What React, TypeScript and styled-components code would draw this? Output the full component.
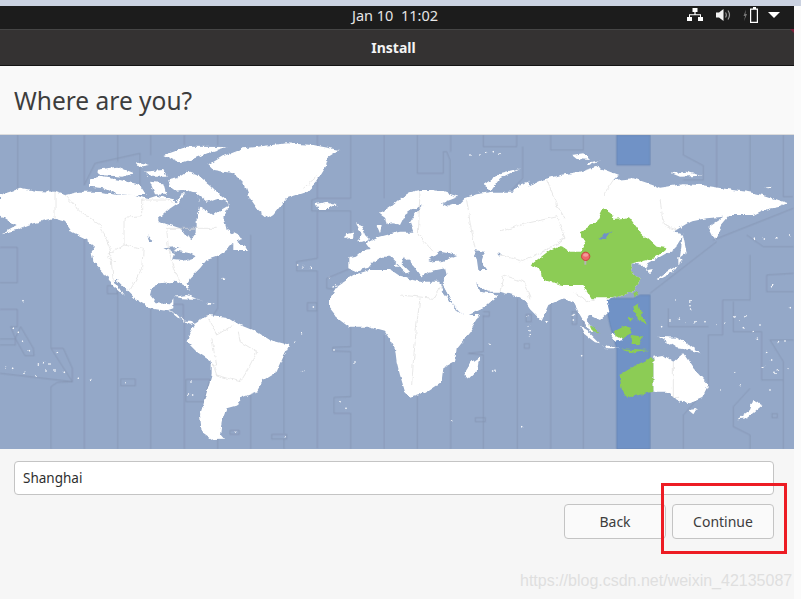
import styled, { createGlobalStyle } from 'styled-components';

const GlobalStyle = createGlobalStyle`
    html, body {
        margin: 0;
        padding: 0;
        background: #fbfbfb;
    }
    body {
        font-family: "Noto Sans", "Open Sans", sans-serif;
    }
`;

// all map shapes are in 3x coordinates, the viewBox scales them down
const westZones = [
    '53,0 53,165', '153,0 153,170', '153,250 153,640 217,740 172,742 153,755 153,942', '253,0 253,150 285,85 420,55 420,190',
    '253,310 253,942', '353,0 353,80', '353,470 353,942', '452,0 452,60', '452,500 452,942', '553,0 553,30', '553,560 553,942',
    '653,0 653,30', '653,360 653,520 640,540', '653,800 653,942', '752,300 752,942', '852,180 852,895', '852,910 852,942',
    '952,0 952,190 935,195 935,228 1052,228 1052,300', '952,230 952,370 890,380 890,408 952,408 952,940', '1052,0 1052,190 952,190',
    '1052,400 980,430 980,460 1052,470', '1052,575 1052,635 998,637 998,648 1052,650 1052,785 1002,787 1002,835 1052,835 1052,942',
    '1153,0 1153,190', '1153,600 1153,942', '0,337 52,337 52,443 0,443', '0,523 52,523 52,575 32,575 46,610 62,575 100,640 102,662 75,662 46,610 46,630 0,630',
    '0,612 46,612', '154,640 190,640 217,700 217,740 0,715', '322,452 352,452 352,476 322,476 322,452', '362,732 406,732 406,752 362,752 362,732',
    '558,733 630,733 612,800 558,800 558,733', '690,886 718,886 718,898 690,898 690,886', '815,898 860,898 860,912 815,912 815,898',
    '922,503 950,503 950,528 922,528 922,503', '515,508 550,508 550,560',
];

const eastZones = [
    '52,0 52,115 130,115 130,50 140,50 150,75 150,190', '152,0 152,50', '250,0 250,35 350,35 350,0', '452,0 452,45 550,45 550,0',
    '368,35 368,130 335,165', '52,780 52,942', '152,520 152,942', '250,540 250,650 205,655 250,660 250,942', '352,490 352,942',
    '452,490 452,942', '550,500 550,942', '850,0 850,60 910,92 910,135 850,135', '950,0 950,165', '1050,0 1050,165', '1150,0 1150,185 1178,185',
    '940,315 1180,220', '1040,300 1090,335 1180,335', '950,320 750,475', '1100,420 1180,415', '1100,420 1100,470 1180,470',
    '1050,360 1050,495 968,495 968,600 925,600 925,755 850,840 850,942', '805,520 805,575 925,575', '1000,500 1000,590 1085,590 1085,735 1150,735',
    '1110,615 1180,615', '1110,615 1150,680 1150,942', '1050,760 1000,815 1000,875 1050,900 1050,942', '226,848 256,848 256,860 226,860 226,848',
    '1116,836 1132,836 1132,848 1116,848 1116,836', '250,530 268,530 268,544 250,544', '378,538 394,538 394,560 378,560 378,538', '516,530 530,530 530,568 516,568 516,530',
    '373,626 388,626 388,640 373,640 373,626',
];

const westLand = [
    // north america
    '0,180 30,170 60,158 110,168 165,170 195,180 240,170 300,170 350,180 400,178 440,192 470,182 520,195 530,205 505,222 475,250 475,262 505,268 540,280 555,300 575,312 590,290 590,250 600,215 640,240 660,225 690,208 670,245 680,285 720,305 730,312 700,322 680,345 650,365 620,375 600,400 570,430 560,445 570,468 555,455 525,440 480,445 455,460 450,480 470,505 510,508 520,490 520,520 505,525 530,535 555,560 568,560 585,565 565,570 545,555 515,530 450,520 410,495 385,470 345,430 345,440 372,482 335,450 310,410 280,380 275,350 285,335 255,310 215,290 195,260 160,250 100,265 50,285 5,295 50,270 35,262 0,240',
    '0,190 35,198 10,210 0,205',
    // arctic islands
    '270,130 300,125 360,135 420,150 440,180 400,180 350,178 310,160 270,155', '290,105 350,95 400,115 370,125 300,120', '405,78 450,90 420,95',
    '490,60 560,35 680,36 630,52 570,75 540,85', '505,135 530,130 560,110 600,125 630,150 660,180 690,205 650,190 620,200 590,175 560,165 530,170 510,155',
    '430,110 490,105 500,125 450,125', '450,140 490,145 500,180 465,178', '525,205 545,178 590,180 600,205',
    // greenland
    '625,90 668,64 730,40 860,25 940,30 1018,45 985,65 975,100 950,140 920,170 860,190 820,240 805,250 775,225 750,190 735,150 700,115 640,105',
    // iceland, uk, caribbean
    '945,207 985,200 1010,208 985,222 955,222', '1065,265 1085,270 1095,300 1110,315 1075,322 1085,300', '1038,295 1060,290 1060,308 1036,312',
    '525,485 560,480 610,498 590,492 545,490', '615,503 645,505 625,510', '700,312 745,345 700,345',
    // south america
    '585,565 625,540 680,545 720,570 770,590 810,615 868,630 850,665 830,710 790,735 770,770 720,790 715,810 680,820 665,860 660,900 672,914 640,915 605,890 600,840 615,790 635,720 635,680 590,650 560,620 570,590',
];

const westWater = [
    '490,340 540,335 520,345 570,355 590,365 550,378 520,375 525,355', '445,298 460,318 450,318', '560,172 590,172 600,215 590,250 560,225 530,210',
];

const westBorders = [
    '165,170 165,250', '195,180 240,230 300,270 330,340 340,440', '425,195 500,195 520,205', '425,195 425,245 372,250 372,330 430,340 425,400 405,440 390,465',
    '372,330 320,365 345,380', '500,280 505,340 520,400 540,440', '500,280 650,280', '620,540 650,600 700,570', '635,610 650,690 640,690 650,720 720,740 750,690 770,650 720,620 715,590',
    '910,160 950,125',
];

const westDots = [
    [40,580],[55,592],[70,622],[88,650],[66,500],[172,650],[16,695],[38,700],[72,715],[108,722],[135,705],[150,690],[130,680],[115,690],[165,705],[190,712],[235,730],[272,730],
    [375,743],[570,738],[565,780],[578,780],[705,892],[855,908],[908,707],[905,596],[885,622],[893,390],[910,395],[932,400],[988,428],[1000,455],[1010,450],[940,516],[670,430],[1020,800],[1038,820],[1062,684],[1005,642],
];

const eastLand = [
    // eurasia
    '-155,370 -135,365 -115,348 -85,345 -100,325 -60,305 -20,295 0,290 40,290 30,262 50,232 70,210 40,222 15,240 0,270 -20,265 -40,268 -45,245 -60,235 -30,215 0,190 30,172 60,165 100,165 135,172 175,185 150,195 125,205 175,210 195,190 230,178 280,170 340,170 345,160 390,150 425,135 480,120 540,110 590,95 655,120 640,135 700,130 760,150 780,158 850,148 900,150 1000,165 1040,170 1090,180 1165,205 1140,215 1090,225 1060,240 990,240 965,270 945,315 925,275 970,245 920,250 870,260 820,290 850,300 825,340 790,360 745,385 735,410 762,405 750,418 725,390 700,385 690,410 720,435 700,470 640,490 620,495 628,530 600,555 570,540 560,555 590,592 570,590 540,540 520,500 490,490 445,510 425,555 390,520 370,490 300,470 260,470 295,480 250,520 195,545 160,510 125,445 140,420 135,400 85,410 65,425 45,395 30,380 10,365 5,385 30,410 20,415 -10,385 -30,365 -60,365 -80,380 -95,398 -135,408 -155,400',
    // africa
    '-210,490 -185,450 -140,420 -90,405 -30,405 0,425 60,440 118,440 130,470 160,510 190,540 240,540 210,590 170,640 165,680 130,700 125,740 80,770 30,785 15,770 0,720 -10,680 -15,640 -45,590 -100,575 -150,575 -190,545 -210,520',
    // islands
    '215,680 238,665 230,710 205,735 190,720', '760,665 790,660 820,680 850,655 880,700 925,750 905,790 870,805 840,800 820,790 800,770 760,770', '865,825 890,822 880,838',
    '1012,853 1050,825 1060,795 1088,810 1040,850', '775,605 830,608 870,630 905,655 870,645 830,640 800,620', '540,575 565,590 600,625 585,622 550,595', '610,630 660,640 620,640',
    '630,597 660,595 668,612 645,618', '770,432 800,410 835,390 835,365 845,375 815,415 775,435', '848,295 860,355 840,370', '250,150 300,115 360,100 300,130 275,165', '355,150 385,140 385,175 360,190',
    '815,115 860,110 905,122 840,125', '515,60 550,55 570,75 530,72', '1092,158 1115,155 1110,160', '560,85 600,75 570,90', '435,555 445,560 440,570', '-70,270 -55,270 -60,295',
    '-20,340 0,345 -5,375', '-15,385 0,395 -15,395',
];

const eastWater = [
    '85,375 120,350 175,360 130,378 100,382', '220,345 255,350 245,380 262,405 235,405 230,370', '125,445 165,520 185,535 150,500',
    '120,205 175,205 145,215', '225,445 270,475 240,470', '295,355 302,358 298,362',
];

const bands = ['650,0 750,0 750,90 650,90', '620,490 700,490 720,480 750,480 750,640 750,942 650,942 650,640 630,570 620,520'];

const chinaShapes = [
    '395,388 450,345 480,330 510,350 540,350 555,325 540,290 590,262 610,220 635,235 640,255 690,250 720,290 770,335 800,340 770,365 740,375 700,385 690,410 720,435 700,470 640,490 575,490 550,450 490,450 430,435 425,410',
    '760,675 760,770 680,788 665,760 658,720 700,695 745,672', '640,590 680,570 695,590 672,612 650,600', '700,515 715,505 725,545 745,570 720,560 705,535',
    '568,568 590,585 598,595 580,592', '695,600 730,605 715,630 695,630', '685,545 700,550 690,560', '700,475 715,470 705,490', '665,640 745,645 700,652',
];

const eastBorders = [
    '60,165 55,300 100,350', '200,195 210,260 225,340', '300,290 380,265 470,245 495,310 440,345 370,380 300,360', '440,135 470,210 495,250', '610,180 640,135', '780,190 790,270 830,285',
    '60,490 50,570 40,680 35,750', '0,480 100,490 125,450', '300,470 310,420 370,440 390,490', '820,680 820,790 840,790', '520,470 560,500 590,490',
];

const eastDots = [
    [270,625],[278,708],[285,706],[383,545],[388,572],[390,590],[388,602],[520,540],[520,555],[545,662],[155,858],[365,875],
    [828,492],[870,500],[870,515],[872,525],[810,555],[835,550],[858,565],[885,560],[915,560],[950,568],[975,568],[1005,545],[1020,555],[1035,545],[1030,575],[1060,590],[1075,610],[1080,570],
    [1135,620],[1155,618],[1100,652],[1115,675],[1090,695],[1135,705],[1125,715],[1165,700],[1005,710],[1020,752],[960,768],[1110,765],[1060,310],[1090,312],[1130,308],[1170,302],[785,575],
    [210,60],[240,60],[260,52],[280,50],[300,55],[1115,452],[1168,515],
];

const toPoints = (x: number, y: number) => `${x - 3},${y} ${x},${y - 3} ${x + 3},${y} ${x},${y + 3}`;

const App = () => (
    <>
        <GlobalStyle />
        <Page>
            <TopStrip />
            <Screen>
                <Panel>
                    <Clock>Jan 10&nbsp;&nbsp;11:02</Clock>
                    <Indicators>
                        <svg width="16" height="14" viewBox="0 0 16 14">
                            <path fill="#fff" d="M5.5 0h5v4H8.6v2.2H14V9h2v4h-5V9h2V7.2H3V9h2v4H0V9h2V6.2h5.4V4H5.5z" />
                        </svg>
                        <svg width="15" height="14" viewBox="0 0 15 14">
                            <path fill="#f2f2f2" d="M0 4.5h3L7.5 1v12L3 9.5H0z" />
                            <path fill="none" stroke="#9a9a9a" strokeWidth="1.2" d="M9.5 4.5c1 1.5 1 3.5 0 5M12 2.5c2 3 2 6 0 9" />
                        </svg>
                        <BatteryIcon width="15" height="16" viewBox="0 0 15 16">
                            <path fill="#777" d="M3 2.5 0.5 9h1.6L1 14 4 7H2.4z" />
                            <path fill="#fff" d="M10 0h3v1.5H15V16H7V1.5h3zM8.2 2.7v12.1h5.6V2.7z" />
                        </BatteryIcon>
                        <ArrowIcon width="12" height="6" viewBox="0 0 12 6">
                            <path fill="#fff" d="M0 0h12L6 6z" />
                        </ArrowIcon>
                    </Indicators>
                </Panel>
                <TitleBar>Install</TitleBar>
                <Heading>
                    <h1>Where are you?</h1>
                </Heading>
                <MapFrame>
                    <svg width="794" height="314" viewBox="0 0 2382 942">
                        <defs>
                            <filter id="soft" filterUnits="userSpaceOnUse" x="0" y="0" width="2382" height="942">
                                <feGaussianBlur stdDeviation="1" />
                            </filter>
                            <filter id="coast" filterUnits="userSpaceOnUse" x="0" y="0" width="2382" height="942">
                                <feTurbulence type="fractalNoise" baseFrequency="0.05" numOctaves="4" seed="7" result="noise" />
                                <feDisplacementMap in="SourceGraphic" in2="noise" scale="14" xChannelSelector="R" yChannelSelector="G" />
                                <feGaussianBlur stdDeviation="1" />
                            </filter>
                        </defs>
                        <rect width="2382" height="942" fill="#94a8c8" />
                        <g filter="url(#soft)">
                            <g transform="translate(1200 0)">
                                {bands.map(p => <polygon key={p} points={p} fill="#6f92c6" stroke="#6580ad" strokeWidth="2" />)}
                                {eastZones.map(p => <Zone key={p} points={p} />)}
                            </g>
                            {westZones.map(p => <Zone key={p} points={p} />)}
                        </g>
                        <g filter="url(#coast)">
                            {westLand.map(p => <polygon key={p} points={p} fill="#fff" />)}
                            {westWater.map(p => <polygon key={p} points={p} fill="#94a8c8" />)}
                            {westBorders.map(p => <Border key={p} points={p} />)}
                            {westDots.map(([x, y]) => <polygon key={`${x}-${y}`} points={toPoints(x, y)} fill="#fff" />)}
                            <g transform="translate(1200 0)">
                                {eastLand.map(p => <polygon key={p} points={p} fill="#fff" />)}
                                {eastWater.map(p => <polygon key={p} points={p} fill="#94a8c8" />)}
                                {eastBorders.map(p => <Border key={p} points={p} />)}
                                {eastDots.map(([x, y]) => <polygon key={`${x}-${y}`} points={toPoints(x, y)} fill="#fff" />)}
                                {chinaShapes.map(p => <polygon key={p} points={p} fill="#8ccc55" />)}
                                <polygon points="598,310 635,285 615,312" fill="#6f92c6" />
                            </g>
                        </g>
                        <g transform="translate(1200 0)">
                            <rect x="553" y="372" width="6" height="17" fill="#b5b5b5" />
                            <circle cx="557" cy="364" r="12.5" fill="#ee6a6a" stroke="#c93636" strokeWidth="2.5" />
                            <ellipse cx="557" cy="360" rx="8" ry="5" fill="#f59a9a" />
                        </g>
                    </svg>
                </MapFrame>
                <Footer>
                    <CityInput readOnly value="Shanghai" />
                    <Actions>
                        <ActionButton>Back</ActionButton>
                        <ActionButton>Continue</ActionButton>
                    </Actions>
                </Footer>
            </Screen>
            <RedBox />
            <Watermark>https://blog.csdn.net/weixin_42135087</Watermark>
        </Page>
    </>
);

const Page = styled.div`
    position: relative;
    width: 801px;
    height: 599px;
    overflow: hidden;
`;

const TopStrip = styled.div`
    height: 6px;
    background: #cbd2e1;
`;

const Screen = styled.div`
    width: 794px;
    height: 593px;
    background: #f6f6f6;
`;

const Panel = styled.div`
    position: relative;
    height: 23px;
    box-sizing: border-box;
    padding-bottom: 5px;
    background: #1c1c1c;
    display: flex;
    align-items: center;
    justify-content: flex-end;
`;

const Clock = styled.span`
    position: absolute;
    left: 352px;
    top: 0;
    font-size: 14.5px;
    line-height: 18px;
    color: #e6e6e6;
    white-space: nowrap;
`;

const Indicators = styled.div`
    display: flex;
    align-items: center;
    gap: 13px;
    padding-right: 14px;
`;

const BatteryIcon = styled.svg`
    margin-left: -1px;
`;

const ArrowIcon = styled.svg`
    margin-left: -3px;
`;

const TitleBar = styled.div`
    position: relative;
    height: 37px;
    box-sizing: border-box;
    padding-right: 7px;
    border-top: 1px solid #454545;
    border-bottom: 1px solid #141414;
    background: #343232;
    color: #f4f4f4;
    font-size: 14px;
    font-weight: 700;
    line-height: 35px;
    text-align: center;
    &::after {
        content: '';
        position: absolute;
        top: -1px;
        right: 0;
        border-top: 4px solid #7a1f3a;
        border-left: 4px solid transparent;
    }
`;

const Heading = styled.div`
    height: 69px;
    box-sizing: border-box;
    padding: 18px 14px 0;
    background: #f9f9f9;
    border-bottom: 1px solid #dcdcdc;
    & h1 {
        margin: 0;
        font-size: 24.5px;
        font-weight: 400;
        line-height: 34px;
        color: #3d3d3d;
    }
`;

const MapFrame = styled.div`
    height: 314px;
    & svg {
        display: block;
    }
`;

const Zone = styled.polyline`
    fill: none;
    stroke: #8493af;
    stroke-width: 2.2;
`;

const Border = styled.polyline`
    fill: none;
    stroke: #dcdcdc;
    stroke-width: 2;
`;

const Footer = styled.div`
    padding: 12px 20px 0 14px;
    display: flex;
    flex-direction: column;
    gap: 9px;
`;

const CityInput = styled.input`
    height: 34px;
    box-sizing: border-box;
    width: 100%;
    padding: 0 8px;
    border: 1px solid #c4c4c4;
    border-radius: 4px;
    background: #fff;
    font-family: "Noto Sans", sans-serif;
    font-size: 13.5px;
    color: #2e2e2e;
    outline: none;
`;

const Actions = styled.div`
    display: flex;
    justify-content: flex-end;
    gap: 6px;
`;

const ActionButton = styled.button`
    width: 102px;
    height: 35px;
    box-sizing: border-box;
    border: 1px solid #c4c4c4;
    border-radius: 4px;
    background: #fafafa;
    font-family: "Noto Sans", sans-serif;
    font-size: 14px;
    color: #3d3d3d;
`;

const RedBox = styled.div`
    position: absolute;
    left: 661px;
    top: 483px;
    width: 126px;
    height: 71px;
    box-sizing: border-box;
    border: 3px solid #ed1c24;
`;

const Watermark = styled.span`
    position: absolute;
    left: 520px;
    top: 571px;
    font-family: "Liberation Sans", sans-serif;
    font-size: 16px;
    line-height: 20px;
    color: #dfdfdf;
    white-space: nowrap;
`;

export default App;
